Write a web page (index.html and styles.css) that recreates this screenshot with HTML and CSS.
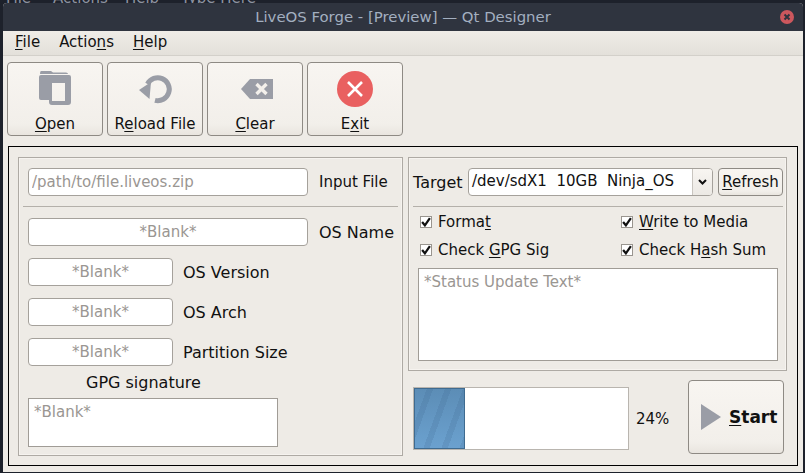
FILE: index.html
```html
<!DOCTYPE html>
<html lang="en">
<head>
    <meta charset="UTF-8">
    <title>LiveOS Forge - [Preview] — Qt Designer</title>
    <link rel="stylesheet" href="styles.css">
</head>
<body>
    <!-- window behind, only its menu shows above ours -->
    <div class="behind"><span>File</span><span>Actions</span><span class="behind-help">Help</span><span>Type Here</span></div>

    <div class="window">
        <div class="titlebar">
            <span class="title">LiveOS Forge - [Preview] — Qt Designer</span>
            <svg class="close" width="14" height="14" viewBox="0 0 14 14">
                <circle cx="7" cy="7" r="7" fill="#cc575d"/>
                <path d="M4.5 4.5l5 5M9.5 4.5l-5 5" stroke="#2f343f" stroke-width="2"/>
            </svg>
        </div>

        <div class="menubar">
            <span><u>F</u>ile</span>
            <span>Actio<u>n</u>s</span>
            <span><u>H</u>elp</span>
        </div>

        <div class="toolbar">
            <button class="tool">
                <svg width="40" height="40" viewBox="0 0 40 40">
                    <path fill="#9a9da6" d="M6 2h10l2 1.5h13q2 0 2 1.5H5q0-3 1-3z"/>
                    <path fill="#9a9da6" fill-rule="evenodd" d="M6 6H34q2 0 2 2V33q0 3-3 3H17q-3 0-3-3V31H6q-2 0-2-2V8q0-2 2-2zM17 14V32H30V14z"/>
                </svg>
                <span><u>O</u>pen</span>
            </button>
            <button class="tool">
                <svg width="40" height="40" viewBox="0 0 40 40">
                    <path fill="none" stroke="#9a9da6" stroke-width="5" d="M12.5 15A11.5 11.5 0 1 1 20 31.4"/>
                    <path fill="#9a9da6" d="M4 21L16 13L14.5 30z"/>
                </svg>
                <span>R<u>e</u>load File</span>
            </button>
            <button class="tool">
                <svg width="40" height="40" viewBox="0 0 40 40">
                    <path fill="#9a9da6" d="M6 20l9-10h23v20H15z"/>
                    <path stroke="#f3f0eb" stroke-width="3.4" d="M21.5 15l10 10M31.5 15l-10 10"/>
                </svg>
                <span><u>C</u>lear</span>
            </button>
            <button class="tool">
                <svg width="40" height="40" viewBox="0 0 40 40">
                    <circle cx="20" cy="20" r="18" fill="#e96060"/>
                    <path stroke="#fff" stroke-width="2.6" d="M13 13l14 14M27 13l-14 14"/>
                </svg>
                <span>E<u>x</u>it</span>
            </button>
        </div>

        <div class="frame">
            <div class="col-left">
                <div class="group group-left">
                    <div class="row row-first">
                        <input class="field wide" placeholder="/path/to/file.liveos.zip">
                        <label>Input File</label>
                    </div>
                    <div class="sep"></div>
                    <div class="row">
                        <input class="field wide center" placeholder="*Blank*">
                        <label>OS Name</label>
                    </div>
                    <div class="row">
                        <input class="field short center" placeholder="*Blank*">
                        <label>OS Version</label>
                    </div>
                    <div class="row">
                        <input class="field short center" placeholder="*Blank*">
                        <label>OS Arch</label>
                    </div>
                    <div class="row">
                        <input class="field short center" placeholder="*Blank*">
                        <label>Partition Size</label>
                    </div>
                    <div class="gpg-label">GPG signature</div>
                    <textarea class="gpg" placeholder="*Blank*"></textarea>
                </div>
            </div>

            <div class="col-right">
                <div class="group group-right">
                    <div class="target-row">
                        <label>Target</label>
                        <div class="combo">
                            <span class="combo-text">/dev/sdX1&nbsp; 10GB&nbsp; Ninja_OS</span>
                            <span class="combo-arrow">
                                <svg width="9" height="6" viewBox="0 0 9 6"><path d="M1 1l3.5 3.5L8 1" fill="none" stroke="#111" stroke-width="2"/></svg>
                            </span>
                        </div>
                        <button class="refresh"><u>R</u>efresh</button>
                    </div>
                    <div class="sep sep-tight"></div>
                    <div class="checks">
                        <div class="check">
                            <span class="box"><svg width="10" height="10" viewBox="0 0 9 9"><path d="M1 4.5l2.5 3L8 1" fill="none" stroke="#111" stroke-width="2"/></svg></span>
                            <span>Forma<u>t</u></span>
                        </div>
                        <div class="check">
                            <span class="box"><svg width="10" height="10" viewBox="0 0 9 9"><path d="M1 4.5l2.5 3L8 1" fill="none" stroke="#111" stroke-width="2"/></svg></span>
                            <span><u>W</u>rite to Media</span>
                        </div>
                        <div class="check">
                            <span class="box"><svg width="10" height="10" viewBox="0 0 9 9"><path d="M1 4.5l2.5 3L8 1" fill="none" stroke="#111" stroke-width="2"/></svg></span>
                            <span>Check <u>G</u>PG Sig</span>
                        </div>
                        <div class="check">
                            <span class="box"><svg width="10" height="10" viewBox="0 0 9 9"><path d="M1 4.5l2.5 3L8 1" fill="none" stroke="#111" stroke-width="2"/></svg></span>
                            <span>Check H<u>a</u>sh Sum</span>
                        </div>
                    </div>
                    <textarea class="status" placeholder="*Status Update Text*"></textarea>
                </div>

                <div class="run-row">
                    <div class="progress"><div class="progress-fill"></div></div>
                    <span class="percent">24%</span>
                    <button class="start">
                        <svg width="20" height="26" viewBox="0 0 20 26"><path d="M0 0l20 13L0 26z" fill="#9a9da6"/></svg>
                        <span><u>S</u>tart</span>
                    </button>
                </div>
            </div>
        </div>
    </div>
</body>
</html>
```

FILE: styles.css
```css
* {
    box-sizing: border-box;
}
body {
    margin: 0;
    height: 473px;
    overflow: hidden;
    background-color: #1d212b;
    font-family: "DejaVu Sans", sans-serif;
    font-size: 15px;
    color: #111;
}
u {
    text-underline-offset: 2px;
}
.behind {
    height: 3px;
    overflow: hidden;
    display: flex;
    gap: 22px;
    padding-left: 6px;
    line-height: 3px;
    font-size: 15px;
    color: #8d93a0;
}
.behind span {
    position: relative;
    top: -3px;
}
.behind .behind-help {
    margin-left: -5px;
}
.window {
    margin-left: 3px;
    width: 800px;
    height: 469px;
    background: #eeebe6;
    border-radius: 4px 4px 0 0;
}
.titlebar {
    height: 28px;
    background: #2f343f;
    border-radius: 4px 4px 0 0;
    display: flex;
    align-items: center;
    justify-content: center;
    position: relative;
}
.title {
    font-size: 14.9px;
    color: #a3afc0;
}
.close {
    position: absolute;
    right: 9px;
    top: 7px;
}
.menubar {
    height: 25px;
    display: flex;
    align-items: center;
    gap: 19px;
    padding: 0 0 2px 12px;
    background: linear-gradient(#efece7, #e3e0da);
    border-bottom: 1px solid #d3d0ca;
}
.toolbar {
    display: flex;
    gap: 4px;
    padding: 6px 0 0 4px;
    height: 90px;
}
button {
    font-family: inherit;
    font-size: 15px;
    color: #111;
    background: linear-gradient(#f8f5f1, #f2efea 85%, #e9e5df);
    border: 1px solid #8e8a84;
    border-radius: 4px;
    padding: 0;
}
.tool {
    width: 96px;
    height: 74px;
    display: flex;
    flex-direction: column;
    align-items: center;
    padding-top: 6px;
}
.tool span {
    margin-top: 6px;
}
.frame {
    margin-left: 5px;
    width: 790px;
    height: 320px;
    border: 1px solid #000;
    display: flex;
    gap: 5px;
    padding: 10px 9px 0 9px;
}
.group {
    border: 1px solid #aeaaa4;
    box-shadow: inset 0 0 0 1px #f6f3ef;
    padding: 10px 3px 10px 4px;
}
.group-left {
    width: 385px;
    height: 299px;
    padding-right: 4px;
}
.col-right {
    width: 379px;
}
.group-right {
    height: 214px;
}
.row {
    display: flex;
    align-items: center;
    margin: 0 0 12px 5px;
    height: 28px;
    font-size: 16px;
}
.row-first {
    margin-bottom: 0;
    font-size: 15px;
}
.row label {
    margin-left: 10px;
}
.row .wide + label {
    margin-left: 11px;
}
.sep {
    height: 1px;
    background: #b4b0aa;
    margin: 10px 0 11px;
}
.sep-tight {
    margin-bottom: 5px;
}
.field {
    height: 28px;
    border: 1px solid #a5a19b;
    border-radius: 4px;
    background: #fff;
    font-family: inherit;
    font-size: 15px;
    padding: 0 3px;
    outline: none;
    flex-shrink: 0;
}
.wide {
    width: 280px;
}
.short {
    width: 145px;
}
.center {
    text-align: center;
}
::placeholder {
    color: #9a9692;
    opacity: 1;
}
.gpg-label {
    margin: -7px 0 0 63px;
    height: 24px;
    line-height: 24px;
    font-size: 16px;
}
textarea {
    display: block;
    resize: none;
    overflow: hidden;
    background: #fff;
    border: 1px solid #a09c96;
    font-family: inherit;
    font-size: 15px;
    padding: 4px 5px;
    outline: none;
}
.gpg {
    margin: 3px 0 0 5px;
    width: 250px;
    height: 49px;
}
.target-row {
    display: flex;
    align-items: center;
    height: 28px;
}
.target-row label {
    width: 50px;
    font-size: 16px;
    white-space: nowrap;
}
.combo {
    margin-left: 5px;
    width: 245px;
    height: 28px;
    display: flex;
    background: #fff;
    border: 1px solid #a5a19b;
    border-radius: 4px;
}
.combo-text {
    flex: 1;
    padding: 0 0 2px 3px;
    line-height: 24px;
    white-space: nowrap;
}
.combo-arrow {
    width: 20px;
    display: flex;
    align-items: center;
    justify-content: center;
    border-left: 1px solid #c9c5bf;
    background: linear-gradient(#f8f5f1, #ece9e4);
    border-radius: 0 3px 3px 0;
}
.refresh {
    margin-left: 5px;
    width: 65px;
    height: 28px;
}
.checks {
    display: grid;
    grid-template-columns: 201px 1fr;
    row-gap: 8px;
    padding-left: 7px;
}
.check {
    display: flex;
    align-items: center;
    gap: 6px;
    height: 20px;
}
.box {
    width: 12px;
    height: 12px;
    border: 1px solid #99958f;
    background: #fff;
    display: flex;
    align-items: center;
    justify-content: center;
}
.status {
    margin: 8px 0 0 5px;
    width: 360px;
    height: 93px;
}
.run-row {
    display: flex;
    align-items: flex-start;
    margin-top: 9px;
}
.progress {
    margin: 7px 0 0 5px;
    width: 216px;
    height: 63px;
    background: #fff;
    border: 1px solid #b9b5af;
}
.progress-fill {
    width: 24%;
    height: 100%;
    border: 1px solid #3f6b90;
    background:
        repeating-linear-gradient(110deg, transparent 0 11px, rgba(60, 100, 140, 0.18) 11px 17px),
        linear-gradient(#5c8db6, #6ba1cf);
}
.percent {
    margin: 30px 0 0 7px;
    width: 52px;
}
.start {
    width: 96px;
    height: 74px;
    display: flex;
    align-items: center;
    padding-left: 12px;
    gap: 8px;
    font-size: 17px;
    font-weight: bold;
}
```
